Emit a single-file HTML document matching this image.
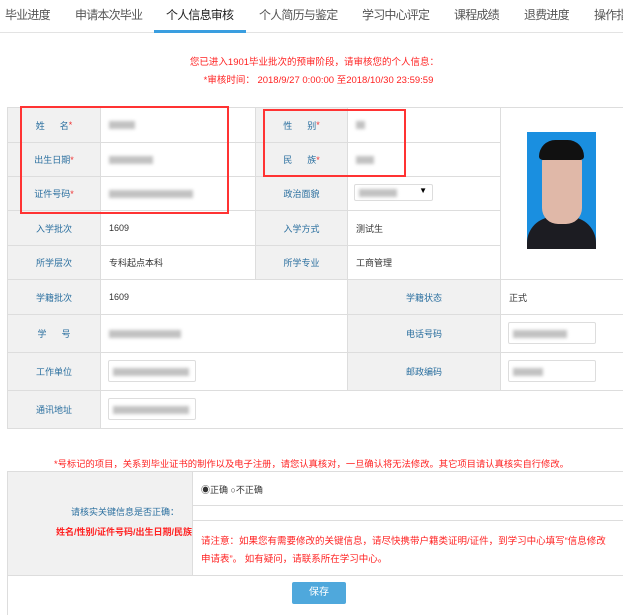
<!DOCTYPE html>
<html><head><meta charset="utf-8"><style>
*{margin:0;padding:0;box-sizing:border-box}
body{width:623px;height:609px;overflow:hidden;background:#fff;font-family:"Liberation Sans","Noto Sans CJK SC",sans-serif;position:relative;font-size:9px;color:#333}
.a{position:absolute}
.nav{top:0;left:0;width:623px;height:33px;border-bottom:1px solid #e3e3e3}
.nav span{position:absolute;top:6px;font-size:12px;letter-spacing:-0.8px;color:#555;white-space:nowrap}
.lbl{position:absolute;background:#f1f1f1;border:1px solid #ddd;color:#2a6f9f;display:flex;align-items:center;justify-content:center;font-size:9px}
.cell{position:absolute;border:1px solid #ddd;display:flex;align-items:center;padding-left:8px;font-size:9px;color:#333}
.st{color:#e33}
.blur{display:inline-block;height:8px;background:#999;filter:blur(1.5px);opacity:.6}
.inp{position:absolute;border:1px solid #ddd;border-radius:2px;background:#fff}
.red{color:#f22}
.box{position:absolute;border:2px solid #f33}
</style></head><body>
<div class="a nav">
<span style="left:5px">毕业进度</span><span style="left:75px">申请本次毕业</span><span style="left:166px;color:#222">个人信息审核</span><span style="left:259px">个人简历与鉴定</span><span style="left:362px">学习中心评定</span><span style="left:454px">课程成绩</span><span style="left:524px">退费进度</span><span style="left:594px">操作指南</span>
</div>
<div class="a" style="left:154px;top:30px;width:92px;height:3px;background:#3a9ee0"></div>
<div class="a red" style="left:0;width:623px;top:54px;text-align:center;font-size:9.5px;padding-left:6px">您已进入1901毕业批次的预审阶段，请审核您的个人信息：</div>
<div class="a red" style="left:0;width:623px;top:72px;text-align:center;font-size:9.5px;padding-left:14px">*审核时间： 2018/9/27 0:00:00 至2018/10/30 23:59:59</div>

<div class="lbl" style="left:7px;top:107px;width:94px;height:36px">姓&nbsp;&nbsp;&nbsp;&nbsp;&nbsp;&nbsp;名<span class="st">*</span></div>
<div class="cell" style="left:100px;top:107px;width:156px;height:36px"><span class="blur" style="width:26px"></span></div>
<div class="lbl" style="left:255px;top:107px;width:93px;height:36px">性&nbsp;&nbsp;&nbsp;&nbsp;&nbsp;&nbsp;别<span class="st">*</span></div>
<div class="cell" style="left:347px;top:107px;width:154px;height:36px"><span class="blur" style="width:9px"></span></div>
<div class="lbl" style="left:7px;top:142px;width:94px;height:35px">出生日期<span class="st">*</span></div>
<div class="cell" style="left:100px;top:142px;width:156px;height:35px"><span class="blur" style="width:44px"></span></div>
<div class="lbl" style="left:255px;top:142px;width:93px;height:35px">民&nbsp;&nbsp;&nbsp;&nbsp;&nbsp;&nbsp;族<span class="st">*</span></div>
<div class="cell" style="left:347px;top:142px;width:154px;height:35px"><span class="blur" style="width:18px"></span></div>
<div class="lbl" style="left:7px;top:176px;width:94px;height:35px">证件号码<span class="st">*</span></div>
<div class="cell" style="left:100px;top:176px;width:156px;height:35px"><span class="blur" style="width:84px"></span></div>
<div class="lbl" style="left:255px;top:176px;width:93px;height:35px">政治面貌</div>
<div class="cell" style="left:347px;top:176px;width:154px;height:35px"></div>
<div class="inp" style="left:354px;top:184px;width:79px;height:17px"><span class="blur a" style="left:4px;top:4px;width:38px"></span><span class="a" style="right:5px;top:1px;font-size:8px;color:#000">▼</span></div>
<div class="lbl" style="left:7px;top:210px;width:94px;height:36px">入学批次</div>
<div class="cell" style="left:100px;top:210px;width:156px;height:36px">1609</div>
<div class="lbl" style="left:255px;top:210px;width:93px;height:36px">入学方式</div>
<div class="cell" style="left:347px;top:210px;width:154px;height:36px">测试生</div>
<div class="lbl" style="left:7px;top:245px;width:94px;height:35px">所学层次</div>
<div class="cell" style="left:100px;top:245px;width:156px;height:35px">专科起点本科</div>
<div class="lbl" style="left:255px;top:245px;width:93px;height:35px">所学专业</div>
<div class="cell" style="left:347px;top:245px;width:154px;height:35px">工商管理</div>
<div class="cell" style="left:500px;top:107px;width:130px;height:173px"></div>
<div class="a" style="left:527px;top:132px;width:69px;height:117px;background:#1a8fe0;overflow:hidden">
<div class="a" style="left:0;top:85px;width:69px;height:40px;background:#1c1c22;border-radius:26px 26px 0 0"></div>
<div class="a" style="left:15px;top:14px;width:40px;height:78px;background:#e0b8a8;border-radius:16px"></div>
<div class="a" style="left:12px;top:8px;width:45px;height:20px;background:#111;border-radius:18px 18px 4px 4px"></div>
</div>
<div class="box" style="left:20px;top:106px;width:209px;height:108px"></div>
<div class="box" style="left:263px;top:109px;width:143px;height:68px"></div>

<div class="lbl" style="left:7px;top:279px;width:94px;height:36px">学籍批次</div>
<div class="cell" style="left:100px;top:279px;width:248px;height:36px">1609</div>
<div class="lbl" style="left:347px;top:279px;width:154px;height:36px">学籍状态</div>
<div class="cell" style="left:500px;top:279px;width:130px;height:36px">正式</div>
<div class="lbl" style="left:7px;top:314px;width:94px;height:39px">学&nbsp;&nbsp;&nbsp;&nbsp;&nbsp;&nbsp;号</div>
<div class="cell" style="left:100px;top:314px;width:248px;height:39px"><span class="blur" style="width:72px"></span></div>
<div class="lbl" style="left:347px;top:314px;width:154px;height:39px">电话号码</div>
<div class="cell" style="left:500px;top:314px;width:130px;height:39px"></div>
<div class="lbl" style="left:7px;top:352px;width:94px;height:39px">工作单位</div>
<div class="cell" style="left:100px;top:352px;width:248px;height:39px"></div>
<div class="lbl" style="left:347px;top:352px;width:154px;height:39px">邮政编码</div>
<div class="cell" style="left:500px;top:352px;width:130px;height:39px"></div>
<div class="lbl" style="left:7px;top:390px;width:94px;height:39px">通讯地址</div>
<div class="cell" style="left:100px;top:390px;width:530px;height:39px"></div>
<div class="inp" style="left:508px;top:322px;width:88px;height:22px"><span class="blur a" style="left:4px;top:7px;width:54px"></span></div>
<div class="inp" style="left:508px;top:360px;width:88px;height:22px"><span class="blur a" style="left:4px;top:7px;width:30px"></span></div>
<div class="inp" style="left:108px;top:360px;width:88px;height:22px"><span class="blur a" style="left:4px;top:7px;width:76px"></span></div>
<div class="inp" style="left:108px;top:398px;width:88px;height:22px"><span class="blur a" style="left:4px;top:7px;width:76px"></span></div>

<div class="a red" style="left:54px;width:530px;top:456px;font-size:9.3px;white-space:nowrap">*号标记的项目，关系到毕业证书的制作以及电子注册，请您认真核对，一旦确认将无法修改。其它项目请认真核实自行修改。</div>

<div class="lbl" style="left:7px;top:471px;width:186px;height:105px;display:block;line-height:20px;padding-top:30px;font-size:9px">
<div style="padding-left:63px">请核实关键信息是否正确：</div><div class="red" style="font-weight:bold;padding-left:48px;white-space:nowrap">姓名/性别/证件号码/出生日期/民族</div></div>
<div class="cell" style="left:192px;top:471px;width:440px;height:35px;align-items:flex-start;padding-top:11px;padding-left:8px">◉正确 ○不正确</div>
<div class="cell" style="left:192px;top:505px;width:440px;height:16px"></div>
<div class="cell red" style="left:192px;top:520px;width:440px;height:56px;display:block;padding:12px 20px 0 8px;line-height:18px;color:#f22;font-size:9.5px">请注意：如果您有需要修改的关键信息，请尽快携带户籍类证明/证件，到学习中心填写“信息修改申请表”。 如有疑问，请联系所在学习中心。</div>
<div class="cell" style="left:7px;top:575px;width:623px;height:40px;border-bottom:none"></div>
<div class="a" style="left:292px;top:582px;width:54px;height:22px;background:#4fa8dc;border-radius:2px;color:#fff;font-size:10px;text-align:center;line-height:22px">保存</div>
</body></html>
